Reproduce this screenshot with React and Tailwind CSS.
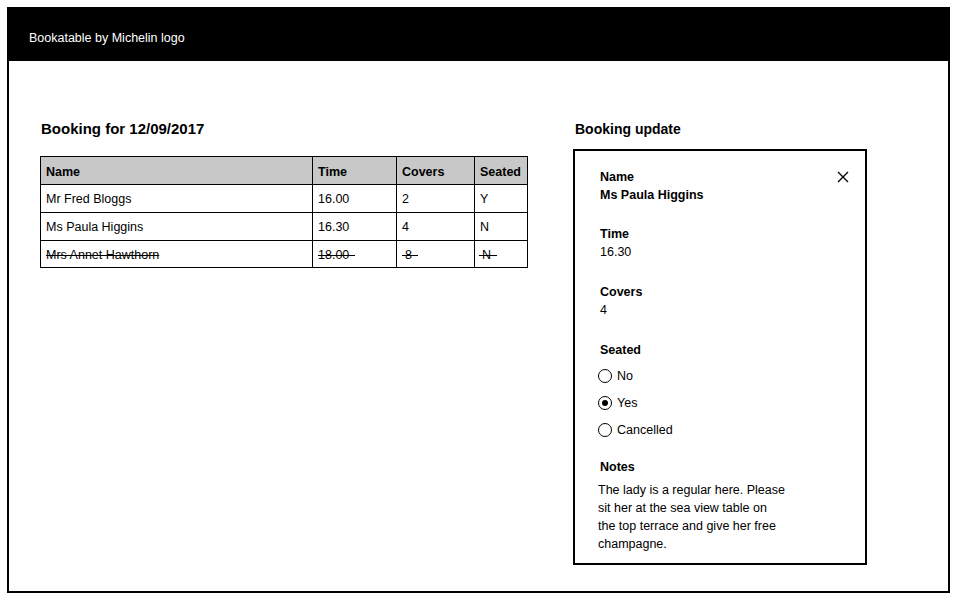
import React from "react";

const font = { fontFamily: '"Liberation Sans", Arial, sans-serif' };

function Strike({ children, left = "left-[-3px]" }) {
  return (
    <span className="relative inline-block">
      {children}
      <span className={`absolute ${left} right-[-6px] top-[52%] h-px bg-black`} />
    </span>
  );
}

function Radio({ checked, label }) {
  return (
    <div className="flex h-[27px] items-center -ml-[2px]">
      <span className="flex h-[14px] w-[14px] items-center justify-center rounded-full border-[1.5px] border-black bg-white">
        {checked && <span className="h-[6px] w-[6px] rounded-full bg-black" />}
      </span>
      <span className="ml-[5px] leading-[18px]">{label}</span>
    </div>
  );
}

export default function App() {
  const rows = [
    { name: "Mr Fred Bloggs", time: "16.00", covers: "2", seated: "Y" },
    { name: "Ms Paula Higgins", time: "16.30", covers: "4", seated: "N" },
  ];
  return (
    <div className="h-[600px] w-[960px] bg-white p-[7px] text-[12.5px] text-black" style={font}>
      <div className="flex h-[586px] w-[943px] flex-col border-2 border-black">
        <div className="flex h-[52px] items-center bg-black pl-[20px] pt-[6px] text-white">
          <span className="leading-[18px]">Bookatable by Michelin logo</span>
        </div>
        <div className="flex pl-[31px] pt-[58px]">
          <div className="w-[488px]">
            <div className="pl-[1px] text-[15px] font-bold leading-[20px]">Booking for 12/09/2017</div>
            <table className="mt-[17px] w-[488px] border-collapse border border-black">
              <thead>
                <tr className="h-[28px] bg-[#c8c8c8] text-left">
                  <th className="w-[272px] border border-black pl-[5px] pt-[3px] font-bold">Name</th>
                  <th className="w-[84px] border border-black pl-[5px] pt-[3px] font-bold">Time</th>
                  <th className="w-[78px] border border-black pl-[5px] pt-[3px] font-bold">Covers</th>
                  <th className="border border-black pl-[5px] pt-[3px] font-bold">Seated</th>
                </tr>
              </thead>
              <tbody>
                {rows.map((r) => (
                  <tr key={r.name} className="h-[28px]">
                    <td className="border border-black pl-[5px] pt-[2px]">{r.name}</td>
                    <td className="border border-black pl-[5px] pt-[2px]">{r.time}</td>
                    <td className="border border-black pl-[5px] pt-[2px]">{r.covers}</td>
                    <td className="border border-black pl-[5px] pt-[2px]">{r.seated}</td>
                  </tr>
                ))}
                <tr className="h-[27px]">
                  <td className="border border-black pl-[5px] pt-[2px]">
                    <span className="line-through">Mrs Annet Hawthorn</span>
                  </td>
                  <td className="border border-black pl-[5px] pt-[2px]">
                    <Strike left="left-0">18.00</Strike>
                  </td>
                  <td className="border border-black pl-[8px] pt-[2px]">
                    <Strike>8</Strike>
                  </td>
                  <td className="border border-black pl-[7px] pt-[2px]">
                    <Strike>N</Strike>
                  </td>
                </tr>
              </tbody>
            </table>
          </div>
          <div className="ml-[45px] w-[294px]">
            <div className="pl-[2px] text-[14px] font-bold leading-[20px]">Booking update</div>
            <div className="mt-[10px] h-[416px] border-2 border-black pl-[25px] pt-[17px]">
              <div className="flex items-start justify-between pr-[16px]">
                <div className="leading-[18px]">
                  <div className="font-bold">Name</div>
                  <div className="font-bold">Ms Paula Higgins</div>
                </div>
                <svg width="12" height="12" viewBox="0 0 12 12" className="mt-[3px]">
                  <path d="M1 1 L11 11 M11 1 L1 11" stroke="black" strokeWidth="1.3" fill="none" />
                </svg>
              </div>
              <div className="mt-[21px] leading-[18px]">
                <div className="font-bold">Time</div>
                <div>16.30</div>
              </div>
              <div className="mt-[22px] leading-[18px]">
                <div className="font-bold">Covers</div>
                <div>4</div>
              </div>
              <div className="mt-[22px] leading-[18px]">
                <div className="font-bold">Seated</div>
              </div>
              <div className="mt-[3px]">
                <Radio label="No" />
                <Radio checked label="Yes" />
                <Radio label="Cancelled" />
              </div>
              <div className="mt-[15px] leading-[18px] font-bold">Notes</div>
              <div className="mt-[5px] -ml-[2px] leading-[18px]">
                The lady is a regular here. Please
                <br />
                sit her at the sea view table on
                <br />
                the top terrace and give her free
                <br />
                champagne.
              </div>
            </div>
          </div>
        </div>
      </div>
    </div>
  );
}
